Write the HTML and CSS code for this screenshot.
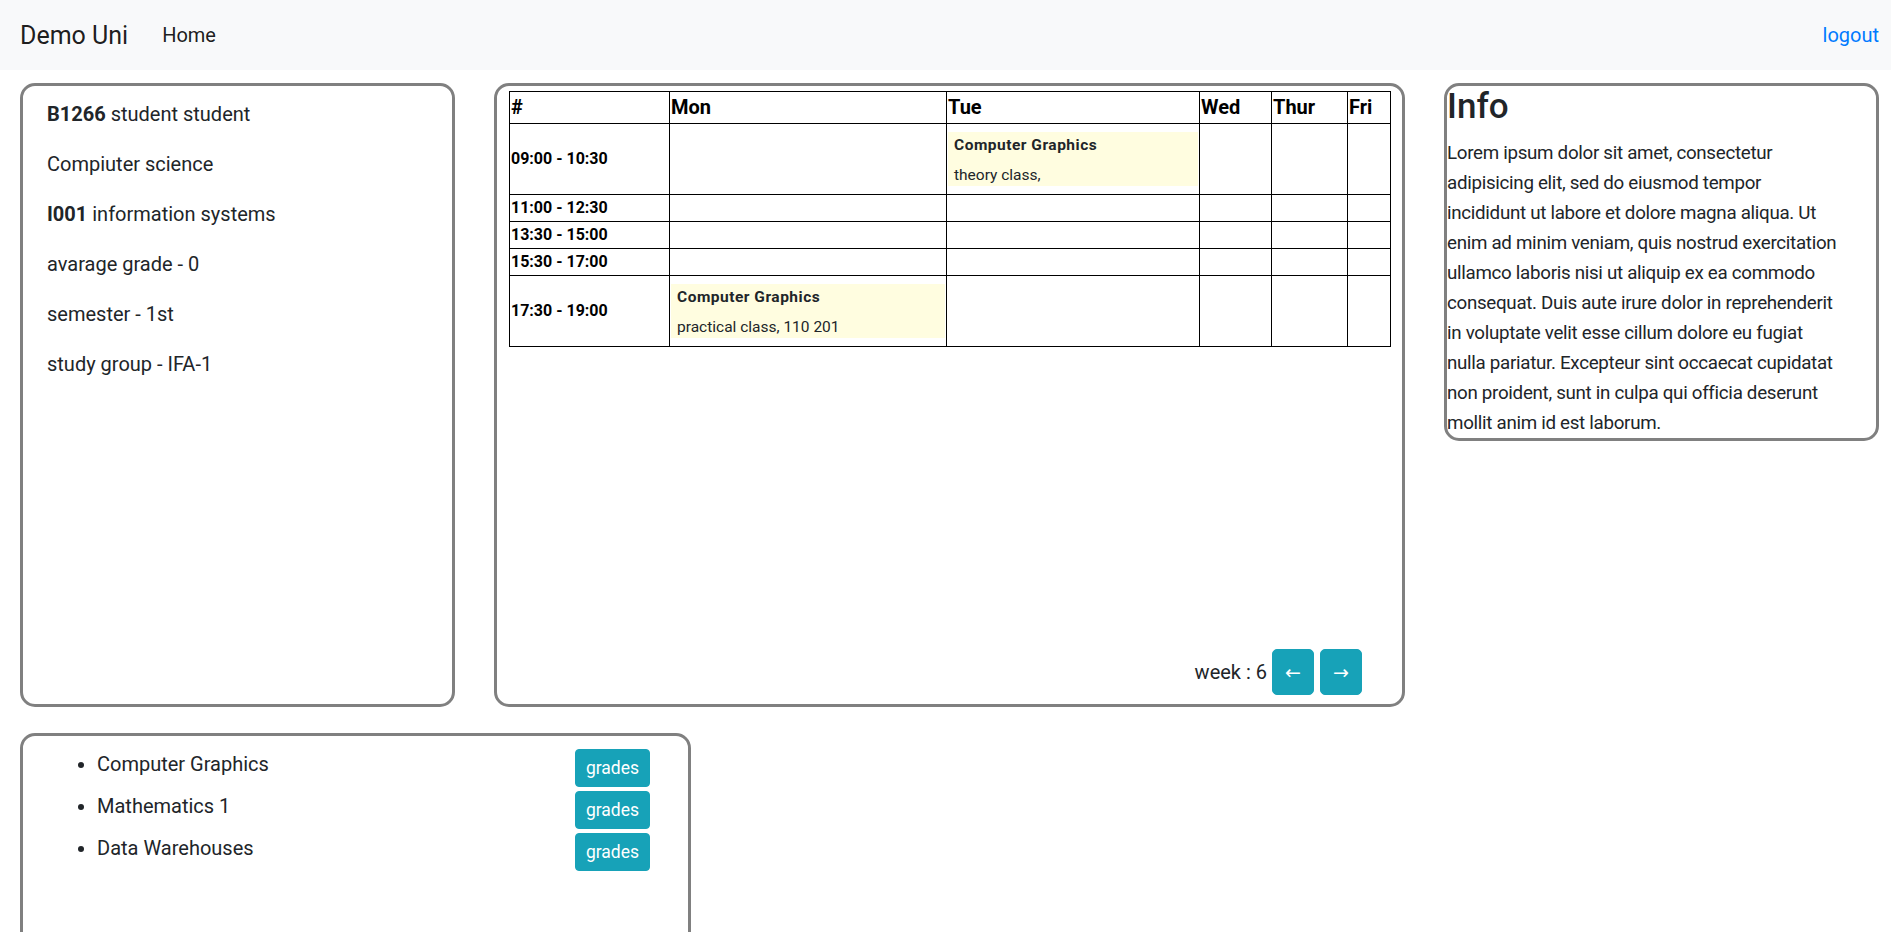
FILE: index.html
```html
<!DOCTYPE html>
<html lang="en">
<head>
  <meta charset="UTF-8">
  <title>Demo Uni - Student</title>
  <link rel="stylesheet" href="styles.css">
</head>
<body>

  <nav class="navbar">
    <a class="brand" href="#">Demo Uni</a>
    <a class="nav-link" href="#">Home</a>
    <a class="logout" href="#">logout</a>
  </nav>

  <div class="main">
    <div class="panel student">
      <p><b>B1266</b> student student</p>
      <p>Compiuter science</p>
      <p><b>I001</b> information systems</p>
      <p>avarage grade - 0</p>
      <p>semester - 1st</p>
      <p>study group - IFA-1</p>
    </div>

    <div class="panel schedule">
      <table class="timetable">
        <colgroup>
          <col class="c-time">
          <col class="c-mon">
          <col class="c-tue">
          <col class="c-wed">
          <col class="c-thu">
          <col>
        </colgroup>
        <thead>
          <tr>
            <th>#</th>
            <th>Mon</th>
            <th>Tue</th>
            <th>Wed</th>
            <th>Thur</th>
            <th>Fri</th>
          </tr>
        </thead>
        <tbody>
          <tr>
            <td class="time">09:00 - 10:30</td>
            <td></td>
            <td>
              <div class="lesson">
                <div class="lesson-name">Computer Graphics</div>
                <div class="lesson-info">theory class,</div>
              </div>
            </td>
            <td></td>
            <td></td>
            <td></td>
          </tr>
          <tr>
            <td class="time">11:00 - 12:30</td>
            <td></td><td></td><td></td><td></td><td></td>
          </tr>
          <tr>
            <td class="time">13:30 - 15:00</td>
            <td></td><td></td><td></td><td></td><td></td>
          </tr>
          <tr>
            <td class="time">15:30 - 17:00</td>
            <td></td><td></td><td></td><td></td><td></td>
          </tr>
          <tr>
            <td class="time">17:30 - 19:00</td>
            <td>
              <div class="lesson">
                <div class="lesson-name">Computer Graphics</div>
                <div class="lesson-info">practical class, 110 201</div>
              </div>
            </td>
            <td></td>
            <td></td>
            <td></td>
            <td></td>
          </tr>
        </tbody>
      </table>

      <div class="week">
        <span>week : 6</span>
        <button class="btn btn-arrow">&larr;</button>
        <button class="btn btn-arrow">&rarr;</button>
      </div>
    </div>

    <div class="panel info">
      <h3>Info</h3>
      <p>Lorem ipsum dolor sit amet, consectetur<br>
        adipisicing elit, sed do eiusmod tempor<br>
        incididunt ut labore et dolore magna aliqua. Ut<br>
        enim ad minim veniam, quis nostrud exercitation<br>
        ullamco laboris nisi ut aliquip ex ea commodo<br>
        consequat. Duis aute irure dolor in reprehenderit<br>
        in voluptate velit esse cillum dolore eu fugiat<br>
        nulla pariatur. Excepteur sint occaecat cupidatat<br>
        non proident, sunt in culpa qui officia deserunt<br>
        mollit anim id est laborum.</p>
    </div>
  </div>

  <div class="panel subjects">
    <ul>
      <li>Computer Graphics <button class="btn btn-sm">grades</button></li>
      <li>Mathematics 1 <button class="btn btn-sm">grades</button></li>
      <li>Data Warehouses <button class="btn btn-sm">grades</button></li>
    </ul>
  </div>

</body>
</html>
```

FILE: styles.css
```css
body {
  margin: 0;
  font-family: Roboto, "Liberation Sans", sans-serif;
  font-size: 20px;
  line-height: 30px;
  color: #212529;
  background: #fff;
}
a {
  text-decoration: none;
}

/* Navbar */
.navbar {
  display: flex;
  align-items: center;
  height: 70px;
  padding: 0 12px 0 20px;
  background-color: #f8f9fa;
}
.brand {
  font-size: 25px;
  line-height: 37px;
  color: rgba(0, 0, 0, .9);
  margin-right: 24px;
}
.nav-link {
  padding: 0 10px;
  color: rgba(0, 0, 0, .9);
}
.logout {
  margin-left: auto;
  color: #007bff;
}

/* Panels */
.main {
  display: grid;
  grid-template-columns: 435px 911px 435px;
  column-gap: 39px;
  align-items: start;
  padding: 13px 0 0 20px;
}
.panel {
  border: 3px solid #808080;
  border-radius: 15px;
  box-sizing: border-box;
}
.student {
  height: 624px;
  padding: 13px 24px;
}
.student p {
  margin: 0 0 20px;
}

.schedule {
  height: 624px;
  padding: 5px 11px 9px 12px;
  display: flex;
  flex-direction: column;
}
.timetable {
  width: 100%;
  table-layout: fixed;
  border-collapse: collapse;
}
.c-time { width: 160px; }
.c-mon { width: 277px; }
.c-tue { width: 253px; }
.c-wed { width: 72px; }
.c-thu { width: 76px; }
.timetable th,
.timetable td {
  border: 1px solid #000;
  padding: 1px;
  text-align: left;
}
.timetable th {
  padding: 0 1px;
  line-height: 31px;
  color: #000;
}
.timetable td.time {
  font-size: 16px;
  line-height: 24px;
  font-weight: bold;
  color: #000;
}
.lesson {
  margin: 7px 0;
  padding: 2px 6px 0;
  height: 54px;
  box-sizing: border-box;
  background-color: #fffde0;
  font-size: 15.5px;
  line-height: 22px;
}
.lesson-name {
  font-weight: bold;
  letter-spacing: .5px;
  margin-bottom: 8px;
}

.week {
  margin-top: auto;
  display: flex;
  justify-content: flex-end;
  align-items: center;
  gap: 6px;
  padding-right: 29px;
}
.week span {
  margin-right: -1px;
}

.btn {
  font-family: inherit;
  font-size: 20px;
  line-height: 30px;
  padding: 7px 14px;
  border: 1px solid #17a2b8;
  border-radius: 5px;
  background-color: #17a2b8;
  color: #fff;
  cursor: pointer;
}
.btn:hover {
  background-color: #138496;
}
.btn-arrow {
  width: 42px;
  padding: 7px 0;
  font-family: "DejaVu Sans", sans-serif;
  font-size: 19px;
  text-align: center;
}
.btn-sm {
  font-size: 17.5px;
  line-height: 26px;
  padding: 5px 10px;
  border-radius: 4px;
}

.info {
  padding: 0;
}
.info h3 {
  margin: 0 0 10px;
  font-size: 35px;
  font-weight: 500;
  line-height: 42px;
}
.info p {
  margin: 0;
  font-size: 18.75px;
  letter-spacing: -.3px;
  white-space: nowrap;
}

.subjects {
  width: 671px;
  height: 300px;
  margin: 26px 0 0 20px;
  padding: 13px 38px 13px 24px;
}
.subjects ul {
  margin: 0;
  padding-left: 50px;
}
.subjects li {
  height: 42px;
}
.subjects li .btn {
  float: right;
}
```
